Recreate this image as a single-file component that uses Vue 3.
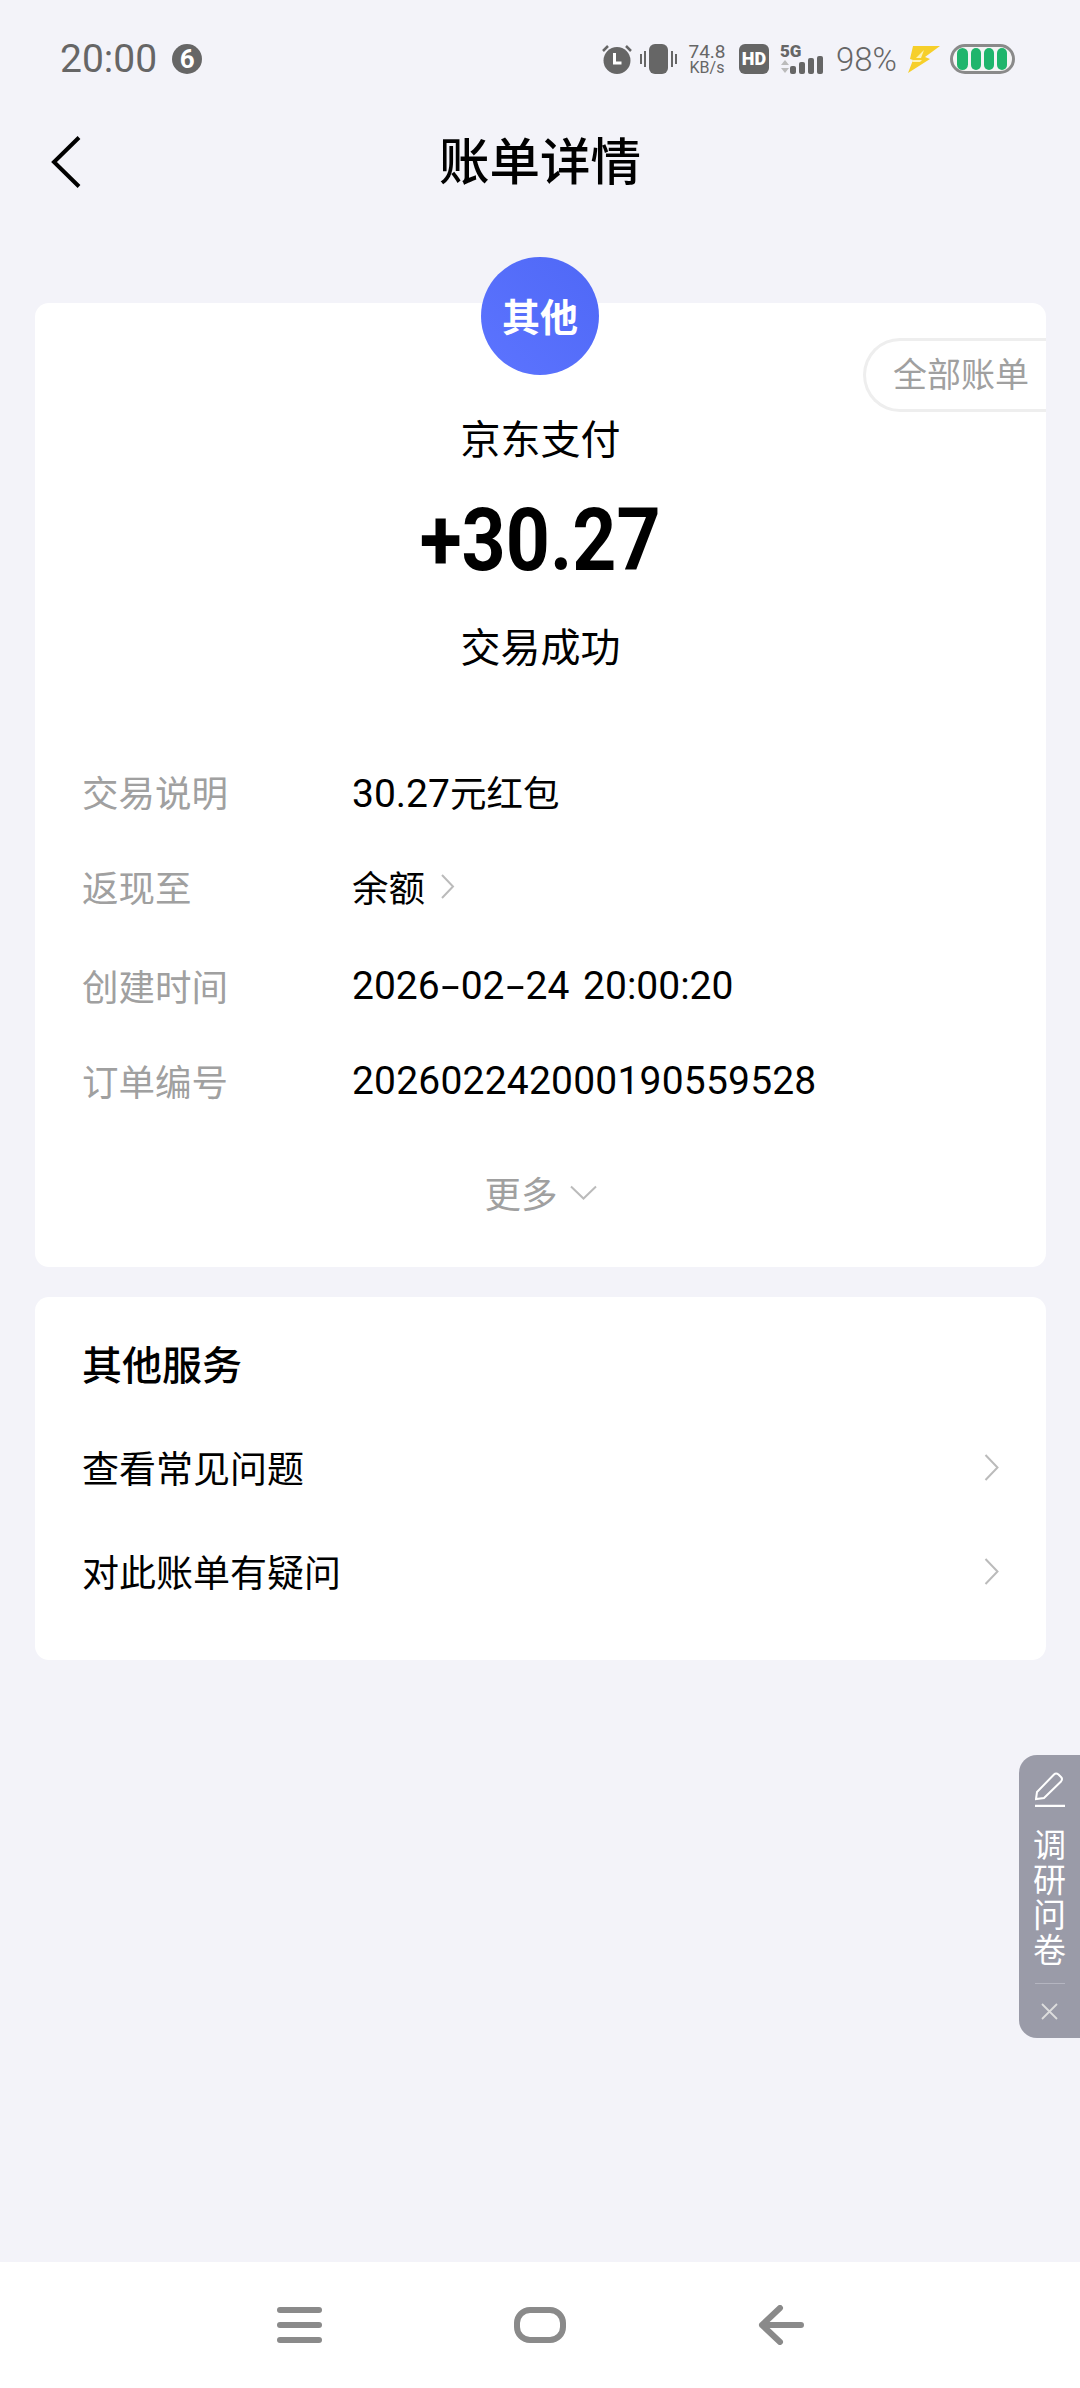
<template>
  <div class="page">
    <!-- STATUS BAR -->
    <div class="status-bar">
      <span class="time">20:00</span>
      <span class="notif">6</span>
      <div class="status-icons">
        <svg class="ic-alarm" width="30" height="30" viewBox="0 0 30 30">
          <circle cx="15" cy="16.5" r="13.5" fill="#666" />
          <path d="M12.5 9v10h7" fill="none" stroke="#fff" stroke-width="3" />
          <path d="M1 7l5-5M29 7l-5-5" stroke="#666" stroke-width="2.5" />
        </svg>
        <svg class="ic-vibrate" width="37" height="30" viewBox="0 0 37 30">
          <rect x="9" y="0" width="19" height="30" rx="6" fill="#666" />
          <path d="M1 10v10M36 10v10" stroke="#666" stroke-width="2" />
          <path d="M5 7v16M32 7v16" stroke="#666" stroke-width="2" />
        </svg>
        <div class="speed">
          <span>74.8</span>
          <span class="speed-unit">KB/s</span>
        </div>
        <div class="hd">HD</div>
        <div class="signal">
          <span class="fiveg">5G</span>
          <svg width="45" height="30" viewBox="0 0 45 30">
            <path d="M1 21l4-5 4 5zM1 24l4 5 4-5z" fill="#bbb" />
            <rect x="10" y="22" width="6" height="8" rx="2" fill="#666" />
            <rect x="19" y="18" width="6" height="12" rx="2" fill="#666" />
            <rect x="28" y="14" width="6" height="16" rx="2" fill="#666" />
            <rect x="37" y="12" width="6" height="18" rx="2" fill="#666" />
          </svg>
        </div>
        <span class="percent">98%</span>
        <svg class="ic-bolt" width="33" height="28" viewBox="0 0 33 28">
          <path d="M6 1h27L18 12l5 2L1 28l5-13-3-1z" fill="#f6cf2a" />
          <path d="M9 13l8-8-3 8z" fill="#fdf3b8" />
          <path d="M6 15h9l-2 2H5z" fill="#fdf3b8" />
        </svg>
        <svg class="ic-battery" width="65" height="30" viewBox="0 0 65 30">
          <rect x="1.5" y="1.5" width="62" height="27" rx="13.5" fill="#f4f4f4" stroke="#8a8a8a" stroke-width="3" />
          <rect x="7" y="4" width="11" height="22" rx="5.5" fill="#1fb56c" />
          <rect x="21" y="4" width="10" height="22" rx="5" fill="#1fb56c" />
          <rect x="34" y="4" width="10" height="22" rx="5" fill="#1fb56c" />
          <rect x="47" y="4" width="10" height="22" rx="5" fill="#1fb56c" />
        </svg>
      </div>
    </div>

    <!-- HEADER -->
    <div class="header">
      <svg class="back" width="30" height="52" viewBox="0 0 30 52">
        <path d="M28 1.5L3 26l25 24.5" fill="none" stroke="#000" stroke-width="4" />
      </svg>
      <h1 class="title">账单详情</h1>
    </div>

    <!-- BILL CARD -->
    <div class="card bill">
      <div class="avatar">其他</div>
      <div class="all-bills">全部账单</div>
      <p class="merchant">京东支付</p>
      <p class="amount"><span>+30.27</span></p>
      <p class="state">交易成功</p>

      <div class="rows">
        <div class="row">
          <span class="label">交易说明</span>
          <span class="value"><span class="num">30.27</span>元红包</span>
        </div>
        <div class="row row-link">
          <span class="label">返现至</span>
          <span class="value">余额</span>
          <svg class="chev-small" width="15" height="25" viewBox="0 0 15 25">
            <path d="M2 1l11 11.5L2 24" fill="none" stroke="#bbb" stroke-width="2" />
          </svg>
        </div>
        <div class="row">
          <span class="label">创建时间</span>
          <span class="value num date">2026<i class="dash">-</i>02<i class="dash">-</i>24 20:00:20</span>
        </div>
        <div class="row">
          <span class="label">订单编号</span>
          <span class="value num order">202602242000190559528</span>
        </div>
      </div>

      <div class="more">
        <span>更多</span>
        <svg width="27" height="15" viewBox="0 0 27 15">
          <path d="M1 1.5l12.5 12L26 1.5" fill="none" stroke="#bbb" stroke-width="2" />
        </svg>
      </div>
    </div>

    <!-- OTHER SERVICES -->
    <div class="card services">
      <h2 class="services-title">其他服务</h2>
      <div v-for="item in services" :key="item" class="service-row">
        <span>{{ item }}</span>
        <svg width="15" height="27" viewBox="0 0 15 27">
          <path d="M1.5 1l12 12.5L1.5 26" fill="none" stroke="#bbb" stroke-width="2" />
        </svg>
      </div>
    </div>

    <!-- SURVEY TAB -->
    <div class="survey">
      <svg width="30" height="35" viewBox="0 0 30 35">
        <path d="M1 27l1-7L19 2.5q2-2 4.5 0l2.500 2.500q2 2 0 4.500L9 26z" fill="none" stroke="#fff" stroke-width="2" />
        <path d="M0 34h30" stroke="#fff" stroke-width="2.5" />
      </svg>
      <div class="survey-text">
        <span>调</span><span>研</span><span>问</span><span>卷</span>
      </div>
      <div class="survey-line"></div>
      <svg width="17" height="17" viewBox="0 0 17 17">
        <path d="M1 1l15 15M16 1L1 16" stroke="#ddd" stroke-width="1.8" />
      </svg>
    </div>

    <!-- NAV BAR -->
    <div class="nav">
      <div class="nav-menu"><i></i><i></i><i></i></div>
      <div class="nav-home"></div>
      <svg width="46" height="40" viewBox="0 0 46 40">
        <path d="M43 20H4M22 3L4 20l18 17" fill="none" stroke="#8a8a8a" stroke-width="6" stroke-linecap="round" stroke-linejoin="round" />
      </svg>
    </div>
  </div>
</template>

<script setup>
const services = ["查看常见问题", "对此账单有疑问"];
</script>

<style>
html,
body {
  margin: 0;
  background: #f3f3f9;
}
</style>

<style scoped>
.page {
  position: relative;
  width: 1080px;
  height: 2388px;
  display: flex;
  flex-direction: column;
  overflow: hidden;
  background: #f3f3f9;
  font-family: Roboto, "Noto Sans CJK SC", sans-serif;
  color: #000;
}

p,
h1,
h2 {
  margin: 0;
  font-weight: 400;
}

/* STATUS BAR */
.status-bar {
  height: 118px;
  padding: 0 65px 0 60px;
  display: flex;
  align-items: center;
  color: #666;
  box-sizing: border-box;
}
.time {
  font-size: 39px;
  line-height: 44px;
}
.notif {
  width: 30px;
  height: 30px;
  margin-left: 15px;
  border-radius: 50%;
  background: #666;
  color: #fff;
  font-size: 26px;
  font-weight: 700;
  line-height: 30px;
  text-align: center;
}
.status-icons {
  margin-left: auto;
  display: flex;
  align-items: center;
}
.ic-vibrate { margin-left: 8px; }
.speed {
  width: 38px;
  margin-left: 11px;
  display: flex;
  flex-direction: column;
  align-items: center;
  font-size: 19px;
  line-height: 17px;
  white-space: nowrap;
}
.speed-unit { font-size: 16px; line-height: 15px; }
.hd {
  width: 30px;
  height: 30px;
  margin-left: 13px;
  border-radius: 6px;
  background: #666;
  color: #fff;
  font-size: 18px;
  font-weight: 900;
  line-height: 30px;
  text-align: center;
}
.signal {
  position: relative;
  width: 45px;
  height: 30px;
  margin-left: 11px;
}
.signal svg { display: block; }
.fiveg {
  position: absolute;
  left: 0;
  top: -2px;
  font-size: 17px;
  font-weight: 900;
  line-height: 18px;
}
.percent {
  width: 61px;
  margin-left: 11px;
  font-size: 33px;
  font-weight: 300;
  white-space: nowrap;
}
.ic-bolt { margin-left: 10px; }
.ic-battery { margin-left: 10px; }

/* HEADER */
.header {
  position: relative;
  height: 84px;
  display: flex;
  align-items: center;
  justify-content: center;
}
.back {
  position: absolute;
  left: 51px;
  top: 18px;
}
.title {
  padding-top: 6px;
  font-size: 50.5px;
  font-weight: 500;
  line-height: 78px;
}

/* CARDS */
.card {
  position: relative;
  width: 1011px;
  margin-left: 35px;
  background: #fff;
  border-radius: 14px;
  box-sizing: border-box;
}
.bill {
  margin-top: 101px;
  padding: 108px 47px 45px;
  text-align: center;
}
.avatar {
  position: absolute;
  left: 446px;
  top: -46px;
  width: 118px;
  height: 118px;
  border-radius: 50%;
  background: linear-gradient(45deg, #5c74ff, #4f68f6);
  color: #fff;
  font-size: 38px;
  font-weight: 700;
  line-height: 123px;
}
.all-bills {
  position: absolute;
  right: 0;
  top: 35px;
  width: 183px;
  height: 74px;
  padding-left: 27px;
  border: 3px solid #eee;
  border-right: none;
  border-radius: 37px 0 0 37px;
  box-sizing: border-box;
  color: #a0a0a0;
  font-size: 34px;
  line-height: 68px;
  text-align: left;
  white-space: nowrap;
}
.merchant,
.state {
  font-size: 40px;
  line-height: 60px;
}
.amount {
  margin-top: 18px;
  padding-top: 2px;
  font-size: 87px;
  font-weight: 700;
  line-height: 98px;
}
.amount span {
  display: inline-block;
  transform: scaleX(0.885);
}
.state { margin-top: 30px; }

.rows {
  margin-top: 65px;
  text-align: left;
}
.row {
  height: 95px;
  display: flex;
  align-items: center;
  font-size: 36.5px;
}
.row-link { margin-bottom: 4px; }
.label {
  width: 270px;
  flex-shrink: 0;
  color: #a0a0a0;
}
.num { font-size: 39px; }
.order { letter-spacing: 0.2px; }
.date { word-spacing: 4px; }
.dash {
  display: inline-block;
  width: 21px;
  font-style: normal;
  text-align: center;
  transform: scaleX(1.7);
}
.chev-small { margin-left: 15px; }

.more {
  height: 60px;
  margin-top: 34px;
  display: flex;
  align-items: center;
  justify-content: center;
  gap: 12px;
  color: #a0a0a0;
  font-size: 36.5px;
}

/* OTHER SERVICES */
.services {
  margin-top: 30px;
  padding: 40px 47px 37px;
}
.services-title {
  font-size: 40px;
  font-weight: 500;
  line-height: 60px;
}
.service-row {
  height: 104px;
  display: flex;
  align-items: center;
  justify-content: space-between;
  font-size: 37px;
}
.services-title + .service-row { margin-top: 18px; }

/* SURVEY TAB */
.survey {
  position: absolute;
  right: 0;
  top: 1755px;
  width: 61px;
  height: 283px;
  padding-top: 17px;
  display: flex;
  flex-direction: column;
  align-items: center;
  border-radius: 18px 0 0 18px;
  background: #9a9ba8;
  color: #fff;
  box-sizing: border-box;
}
.survey-text {
  margin-top: 21px;
  display: flex;
  flex-direction: column;
  font-size: 33px;
  line-height: 35px;
}
.survey-line {
  width: 30px;
  height: 1px;
  margin: 15px 0 19px;
  background: #b4b5c0;
}

/* NAV BAR */
.nav {
  height: 126px;
  margin-top: auto;
  display: flex;
  align-items: center;
  justify-content: space-between;
  padding: 0 276px 0 277px;
  background: #fff;
  box-sizing: border-box;
}
.nav-menu {
  width: 45px;
  display: flex;
  flex-direction: column;
  gap: 9px;
}
.nav-menu i {
  height: 6px;
  border-radius: 3px;
  background: #8a8a8a;
}
.nav-home {
  width: 52px;
  height: 36px;
  border: 6px solid #8a8a8a;
  border-radius: 16px;
  box-sizing: border-box;
}
</style>
